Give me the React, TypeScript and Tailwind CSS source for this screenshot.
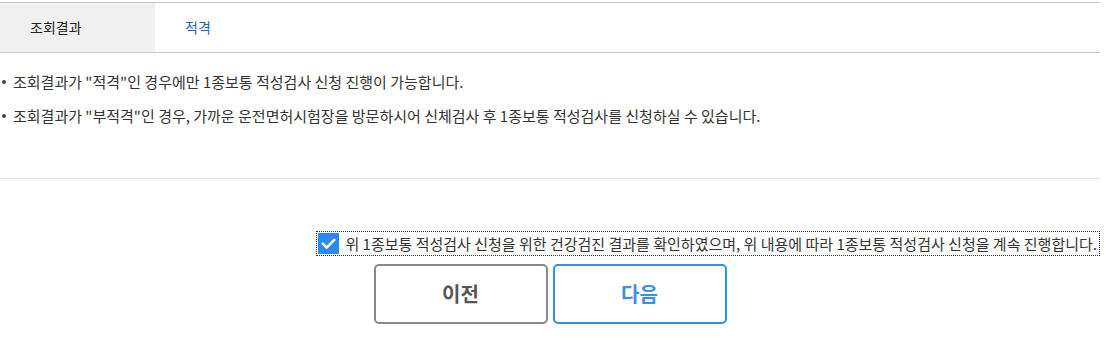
import { useState } from 'react';

const FONT = { fontFamily: '"Noto Sans CJK KR", "Noto Sans", sans-serif' };

function CheckMark() {
  return (
    <svg viewBox="0 0 20 20" className="h-[21px] w-[21px]">
      <rect x="0" y="0" width="20" height="20" fill="#2a8af0" />
      <path d="M4.5 10.2 L8.3 14 L15.5 6.5" fill="none" stroke="#fff" strokeWidth="2.4" strokeLinecap="round" strokeLinejoin="round" />
    </svg>
  );
}

function Bullet() {
  return <span className="ml-[2px] mr-[7px] h-[4px] w-[4px] shrink-0 rounded-full bg-[#444]" />;
}

export default function App() {
  const [agreed, setAgreed] = useState(true);

  return (
    <div className="min-h-[342px] bg-white text-[#333]" style={FONT}>
      <div className="w-[1100px]">
        {/* 조회결과 row */}
        <div className="mt-[2px] flex h-[51px] border-y border-[#c8c8c8] text-[14px]">
          <div className="flex w-[155px] items-center bg-[#f0f0f0] pl-[30px] text-[#222]">조회결과</div>
          <div className="flex items-center pl-[30px] text-[#1c64c0]">적격</div>
        </div>

        {/* notices */}
        <ul className="border-b border-[#e6e6e6] pt-[18px] pb-[51px] text-[15px] leading-[22px]">
          <li className="flex items-center">
            <Bullet />
            조회결과가 "적격"인 경우에만 1종보통 적성검사 신청 진행이 가능합니다.
          </li>
          <li className="mt-[12px] flex items-center">
            <Bullet />
            조회결과가 "부적격"인 경우, 가까운 운전면허시험장을 방문하시어 신체검사 후 1종보통 적성검사를 신청하실 수 있습니다.
          </li>
        </ul>

        {/* agreement */}
        <div className="flex justify-end pt-[52px]">
          <label
            className="flex cursor-pointer items-center gap-[6px] border border-dotted border-[#333] py-[1px] pl-[1px] pr-[2px] text-[15px] leading-[21px]"
            onClick={() => setAgreed(!agreed)}
          >
            {agreed ? <CheckMark /> : <span className="h-[21px] w-[21px] border border-[#999] bg-white" />}
            위 1종보통 적성검사 신청을 위한 건강검진 결과를 확인하였으며, 위 내용에 따라 1종보통 적성검사 신청을 계속 진행합니다.
          </label>
        </div>

        {/* buttons */}
        <div className="mt-[8px] flex justify-center gap-[5px]">
          <button className="h-[60px] w-[174px] rounded-[5px] border-2 border-[#888] bg-white text-[20px] font-bold text-[#555]">
            이전
          </button>
          <button className="h-[60px] w-[174px] rounded-[5px] border-2 border-[#2e90f5] bg-white text-[20px] font-bold text-[#3b8fe8]">
            다음
          </button>
        </div>
      </div>
    </div>
  );
}
